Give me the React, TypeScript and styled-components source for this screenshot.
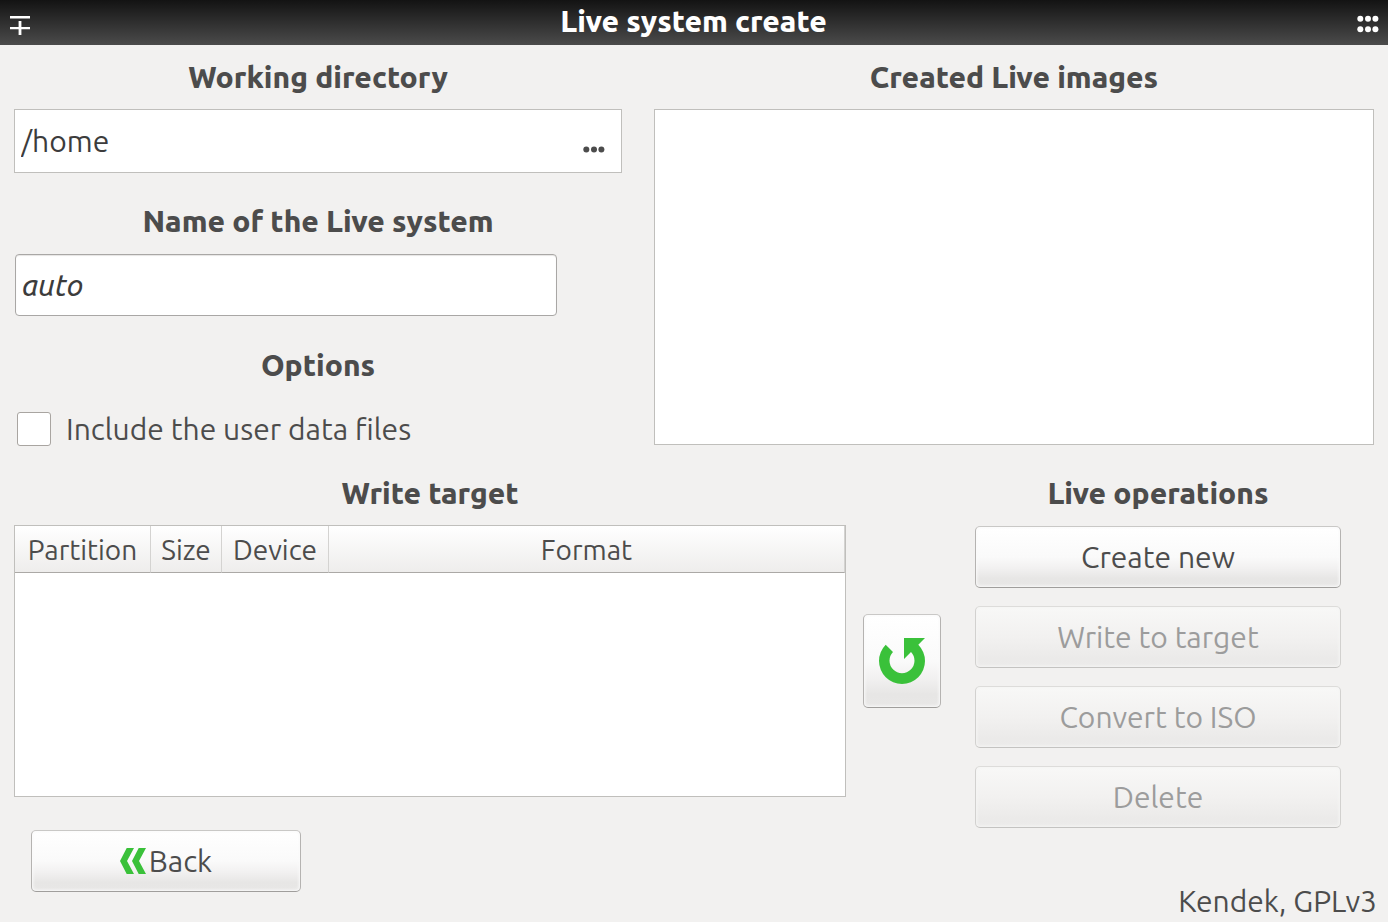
import React from "react";
import styled, { createGlobalStyle, css } from "styled-components";

const GlobalStyle = createGlobalStyle`
  *, *::before, *::after { box-sizing: border-box; }
  body {
    margin: 0;
    background: #f2f1f0;
    color: #4c4c4c;
    font-family: Ubuntu, "Noto Sans", sans-serif;
    font-size: 30px;
    font-weight: 440;
    line-height: 32px;
  }
  button, input { font: inherit; color: inherit; }
`;

const Window = styled.div`
  display: flex;
  flex-direction: column;
  min-height: 100vh;
`;

const TitleBar = styled.header`
  display: flex;
  align-items: center;
  justify-content: space-between;
  height: 45px;
  padding: 0 9px 0 10px;
  background: linear-gradient(#131313, #4b4b4b);
  color: #fff;
`;

const Title = styled.h1`
  margin: 0;
  padding-bottom: 4px;
  font-size: 30px;
  line-height: 40px;
  font-weight: 800;
`;

const IconButton = styled.button`
  display: flex;
  padding: 0;
  border: 0;
  background: none;
  cursor: pointer;
`;

const Content = styled.main`
  display: flex;
  flex-direction: column;
  gap: 32px;
  padding: 16px 14px 0;
`;

const UpperArea = styled.div`
  display: grid;
  grid-template-columns: 608fr 720fr;
  gap: 32px;
`;

const Column = styled.div`
  display: flex;
  flex-direction: column;
  gap: 32px;
`;

const Group = styled.section<{ $gap?: number }>`
  display: flex;
  flex-direction: column;
  gap: ${(p) => p.$gap ?? 16}px;
`;

const headingText = css`
  margin: 0;
  font-size: 30px;
  line-height: 32px;
  font-weight: 800;
  text-align: center;
`;

const Heading = styled.h2`
  ${headingText}
`;

const FieldHeading = styled.label`
  ${headingText}
`;

const PathField = styled.div`
  display: flex;
  align-items: center;
  height: 64px;
  padding: 0 16px 0 6px;
  border: 1px solid #c0bfbc;
  background: #fff;
`;

const PathInput = styled.input`
  flex: 1;
  min-width: 0;
  padding: 0;
  border: 0;
  outline: 0;
  background: none;
  color: #3c3c3c;
`;

const BrowseButton = styled(IconButton)`
  padding-top: 16px;
`;

const NameInput = styled.input`
  width: calc(100% - 66px);
  height: 62px;
  margin: 1px;
  padding: 0 6px;
  border: 1px solid #a9a7a5;
  border-radius: 4px;
  outline: 0;
  background: #fff;
  box-shadow: inset 0 1px 1px #e6e5e4;
  color: #3c3c3c;
  font-style: italic;
`;

const CheckRow = styled.label`
  display: flex;
  align-items: center;
  gap: 15px;
  height: 32px;
  padding-left: 3px;
`;

const CheckBox = styled.input`
  appearance: none;
  flex: none;
  width: 34px;
  height: 34px;
  margin: 0;
  border: 1px solid #a9a5a1;
  border-radius: 3px;
  background: #fff;
  &:checked { background: #3ac13a; }
`;

const ImageList = styled.div`
  flex: 1;
  min-height: 336px;
  border: 1px solid #c0bfbc;
  background: #fff;
`;

const LowerArea = styled.div`
  display: flex;
  gap: 34px;
  padding-right: 33px;
`;

const TargetArea = styled.section`
  flex: 1;
  display: grid;
  grid-template-columns: 1fr 78px;
  grid-template-rows: 32px 272px;
  gap: 16px 17px;
  align-items: center;
`;

const TargetHeading = styled(Heading)`
  grid-column: 1 / -1;
  padding-right: 95px;
`;

const TableFrame = styled.div`
  height: 272px;
  border: 1px solid #c0bfbc;
  background: #fff;
`;

const TargetTable = styled.table`
  width: 100%;
  table-layout: fixed;
  border-collapse: separate;
  border-spacing: 0;
`;

const HeadCell = styled.th<{ $width?: number }>`
  width: ${(p) => (p.$width ? `${p.$width}px` : "auto")};
  height: 47px;
  padding: 2px 0 0;
  border-right: 1px solid #d4d3d1;
  border-bottom: 1px solid #aba9a6;
  background: linear-gradient(#fff, #eeedec);
  font-size: 28px;
  font-weight: 440;
`;

const PushButton = styled.button`
  display: flex;
  align-items: center;
  justify-content: center;
  height: 62px;
  padding: 0;
  border: 1px solid;
  border-color: #c9c8c6 #b5b3b1 #a09e9c;
  border-radius: 5px;
  background: linear-gradient(#fff, #fafafa 50%, #f2f1f1 68%, #e7e6e5 86%, #e8e7e6);
  box-shadow: inset 0 0 3px 1px #fafafa;
  cursor: pointer;
  &:disabled {
    border-color: #dddcda #d2d1cf #c4c3c1;
    background: linear-gradient(#f8f8f7, #f2f1f0 50%, #ebeae9 86%, #ecebea);
    box-shadow: inset 0 0 3px 1px #f5f5f4;
    color: #9c9c9c;
    cursor: default;
  }
`;

const RefreshButton = styled(PushButton)`
  height: 94px;
`;

const BackButton = styled(PushButton)`
  width: 270px;
  gap: 3px;
`;

const Operations = styled(Group)`
  width: 366px;
`;

const ButtonStack = styled.div`
  display: flex;
  flex-direction: column;
  gap: 18px;
  padding-top: 1px;
`;

const Footer = styled.footer`
  display: flex;
  justify-content: space-between;
  min-height: 87px;
  margin-top: 2px;
  padding: 0 11px 0 31px;
`;

const Credit = styled.span`
  align-self: flex-end;
`;

const MinimizeIcon = () => (
  <svg width="20" height="25" viewBox="0 0 20 25" fill="#fff">
    <path d="M0 6h20v2.5H0zM0 17h20v2.3H0zM8.6 11h2.8v14H8.6z" />
  </svg>
);

const MenuIcon = () => (
  <svg width="22" height="21" viewBox="0 0 22 21" fill="#fff">
    {[6.7, 17.3].map((y) => [3.3, 11, 18.4].map((x) => <circle key={`${x}-${y}`} cx={x} cy={y} r="3" />))}
  </svg>
);

const EllipsisIcon = () => (
  <svg width="22" height="7" viewBox="0 0 22 7" fill="#4c4c4c">
    {[3.3, 11, 18.4].map((x) => <circle key={x} cx={x} cy="3.5" r="3" />)}
  </svg>
);

const RefreshIcon = () => (
  <svg width="48" height="48" viewBox="0 0 48 48" fill="#3ac13a">
    <path d="M26 1H47L40.3 7.7A23 23 0 1 1 7.7 7.7L15 15A12.5 12.5 0 1 0 33 15L26 22Z" />
  </svg>
);

const BackIcon = () => (
  <svg width="26" height="26" viewBox="0 0 26 26" fill="#3ac13a">
    <path d="M6.7 0H14L7 13L14 26H6.7L0 13ZM18.7 0H26L19 13L26 26H18.7L12 13Z" />
  </svg>
);

const operations = [
  { label: "Create new", enabled: true },
  { label: "Write to target", enabled: false },
  { label: "Convert to ISO", enabled: false },
  { label: "Delete", enabled: false },
];

export default function App() {
  return (
    <>
      <GlobalStyle />
      <Window>
        <TitleBar>
          <IconButton aria-label="Minimize"><MinimizeIcon /></IconButton>
          <Title>Live system create</Title>
          <IconButton aria-label="Menu"><MenuIcon /></IconButton>
        </TitleBar>
        <Content>
          <UpperArea>
            <Column>
              <Group>
                <FieldHeading htmlFor="workdir">Working directory</FieldHeading>
                <PathField>
                  <PathInput id="workdir" type="text" defaultValue="/home" />
                  <BrowseButton aria-label="Browse"><EllipsisIcon /></BrowseButton>
                </PathField>
              </Group>
              <Group>
                <FieldHeading htmlFor="livename">Name of the Live system</FieldHeading>
                <NameInput id="livename" type="text" defaultValue="auto" />
              </Group>
              <Group $gap={32}>
                <Heading>Options</Heading>
                <CheckRow>
                  <CheckBox type="checkbox" />
                  Include the user data files
                </CheckRow>
              </Group>
            </Column>
            <Group>
              <Heading>Created Live images</Heading>
              <ImageList />
            </Group>
          </UpperArea>
          <LowerArea>
            <TargetArea>
              <TargetHeading>Write target</TargetHeading>
              <TableFrame>
                <TargetTable>
                  <thead>
                    <tr>
                      <HeadCell scope="col" $width={136}>Partition</HeadCell>
                      <HeadCell scope="col" $width={71}>Size</HeadCell>
                      <HeadCell scope="col" $width={107}>Device</HeadCell>
                      <HeadCell scope="col">Format</HeadCell>
                    </tr>
                  </thead>
                </TargetTable>
              </TableFrame>
              <RefreshButton aria-label="Refresh"><RefreshIcon /></RefreshButton>
            </TargetArea>
            <Operations>
              <Heading>Live operations</Heading>
              <ButtonStack>
                {operations.map((op) => (
                  <PushButton key={op.label} disabled={!op.enabled}>{op.label}</PushButton>
                ))}
              </ButtonStack>
            </Operations>
          </LowerArea>
        </Content>
        <Footer>
          <BackButton><BackIcon />Back</BackButton>
          <Credit>Kendek, GPLv3</Credit>
        </Footer>
      </Window>
    </>
  );
}
